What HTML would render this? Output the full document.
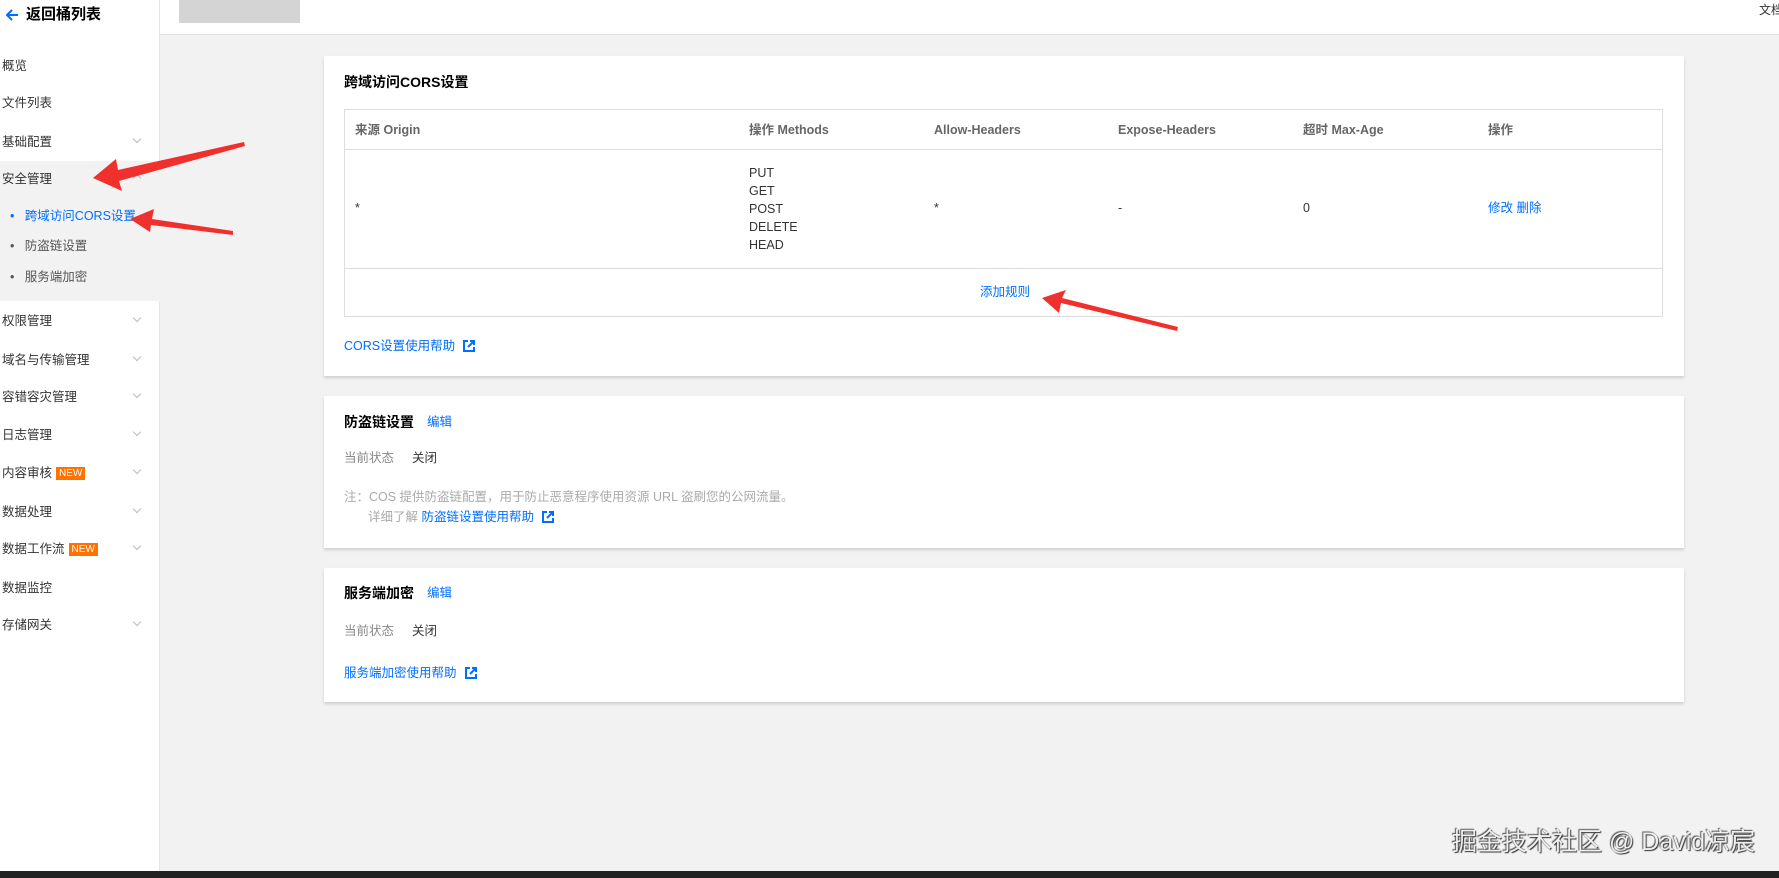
<!DOCTYPE html>
<html><head><meta charset="utf-8"><style>
*{margin:0;padding:0;box-sizing:border-box}
body{width:1779px;height:878px;overflow:hidden;background:#f2f2f2;font-family:"Liberation Sans","Noto Sans CJK SC",sans-serif;font-size:12.5px;color:#333;position:relative}
.a{position:absolute;white-space:nowrap;line-height:16px}
.blue{color:#006eff}
.grey{color:#888}
.side{position:absolute;left:0;top:0;width:160px;height:878px;background:#fff;border-right:1px solid #e5e5e5}
.card{position:absolute;left:324px;width:1360px;background:#fff;box-shadow:0 2px 3px rgba(0,0,0,.15)}
.chev{position:absolute;left:134px;width:6px;height:6px;border-right:1px solid #bbb;border-bottom:1px solid #bbb;transform:rotate(45deg)}
.new{background:#ff7200;color:#fff;font-size:10px;padding:0 3px;line-height:13px;margin-left:4px;display:inline-block;vertical-align:1px}
.ext{display:inline-block;margin-left:8px;vertical-align:-2px}
.th{color:#666;font-weight:bold}
</style></head><body>
<div style="position:absolute;left:0;top:0;width:1779px;height:34px;background:#fff"></div>
<div style="position:absolute;left:160px;top:34px;width:1619px;height:1px;background:#e2e2e2"></div>
<div style="position:absolute;left:179px;top:0;width:121px;height:23px;background:#d4d4d4"></div>
<div class="side"></div>
<div style="position:absolute;left:0;top:161px;width:160px;height:140px;background:#f2f2f2"></div>
<svg class="a" style="left:4px;top:7px" width="16" height="16" viewBox="0 0 16 16"><path d="M14 8H3M8 3L3 8l5 5" stroke="#006eff" stroke-width="2" fill="none"/></svg>
<div class="a" style="left:26px;top:7px;font-size:15px;font-weight:bold;color:#000">返回桶列表</div>
<div class="a" style="left:1759px;top:2px;font-size:12px">文档</div>
<div class="a" style="left:2px;top:58px">概览</div>
<div class="a" style="left:2px;top:95px">文件列表</div>
<div class="a" style="left:2px;top:134px">基础配置</div><div class="chev" style="top:136px"></div>
<div class="a" style="left:2px;top:171px">安全管理</div><div class="chev" style="top:175px;transform:rotate(225deg)"></div>
<div class="a" style="left:10px;top:208px;color:#006eff">•&nbsp;&nbsp;&nbsp;跨域访问CORS设置</div>
<div class="a" style="left:10px;top:238px;color:#555">•&nbsp;&nbsp;&nbsp;防盗链设置</div>
<div class="a" style="left:10px;top:269px;color:#555">•&nbsp;&nbsp;&nbsp;服务端加密</div>
<div class="a" style="left:2px;top:313px">权限管理</div><div class="chev" style="top:315px"></div>
<div class="a" style="left:2px;top:352px">域名与传输管理</div><div class="chev" style="top:354px"></div>
<div class="a" style="left:2px;top:389px">容错容灾管理</div><div class="chev" style="top:391px"></div>
<div class="a" style="left:2px;top:427px">日志管理</div><div class="chev" style="top:429px"></div>
<div class="a" style="left:2px;top:465px">内容审核<span class="new">NEW</span></div><div class="chev" style="top:467px"></div>
<div class="a" style="left:2px;top:504px">数据处理</div><div class="chev" style="top:506px"></div>
<div class="a" style="left:2px;top:541px">数据工作流<span class="new">NEW</span></div><div class="chev" style="top:543px"></div>
<div class="a" style="left:2px;top:580px">数据监控</div>
<div class="a" style="left:2px;top:617px">存储网关</div><div class="chev" style="top:619px"></div>

<div class="card" style="top:56px;height:320px"></div>
<div class="a" style="left:344px;top:74px;font-size:14px;font-weight:bold;color:#000">跨域访问CORS设置</div>
<div style="position:absolute;left:344px;top:109px;width:1319px;height:208px;border:1px solid #ddd"></div>
<div style="position:absolute;left:344px;top:149px;width:1319px;height:1px;background:#ddd"></div>
<div style="position:absolute;left:344px;top:268px;width:1319px;height:1px;background:#ddd"></div>
<div class="a th" style="left:355px;top:122px">来源 Origin</div>
<div class="a th" style="left:749px;top:122px">操作 Methods</div>
<div class="a th" style="left:934px;top:122px">Allow-Headers</div>
<div class="a th" style="left:1118px;top:122px">Expose-Headers</div>
<div class="a th" style="left:1303px;top:122px">超时 Max-Age</div>
<div class="a th" style="left:1488px;top:122px">操作</div>
<div class="a" style="left:355px;top:200px">*</div>
<div class="a" style="left:749px;top:164px;line-height:18px">PUT<br>GET<br>POST<br>DELETE<br>HEAD</div>
<div class="a" style="left:934px;top:200px">*</div>
<div class="a" style="left:1118px;top:200px">-</div>
<div class="a" style="left:1303px;top:200px">0</div>
<div class="a blue" style="left:1488px;top:200px">修改 删除</div>
<div class="a blue" style="left:980px;top:284px">添加规则</div>
<div class="a blue" style="left:344px;top:338px">CORS设置使用帮助<svg class="ext" width="12" height="12" viewBox="0 0 12 12"><path d="M5 1H1v10h10V7" stroke="#006eff" stroke-width="2" fill="none"/><path d="M7 1h4v4M11 1L5 7" stroke="#006eff" stroke-width="2" fill="none"/></svg></div>

<div class="card" style="top:396px;height:152px"></div>
<div class="a" style="left:344px;top:414px;font-size:14px;font-weight:bold;color:#000">防盗链设置</div>
<div class="a blue" style="left:427px;top:414px">编辑</div>
<div class="a grey" style="left:344px;top:450px">当前状态</div><div class="a" style="left:412px;top:450px">关闭</div>
<div class="a" style="left:344px;top:489px;color:#aaa">注：COS 提供防盗链配置，用于防止恶意程序使用资源 URL 盗刷您的公网流量。</div>
<div class="a" style="left:368px;top:509px;color:#aaa">详细了解 <span class="blue">防盗链设置使用帮助</span><svg class="ext" width="12" height="12" viewBox="0 0 12 12"><path d="M5 1H1v10h10V7" stroke="#006eff" stroke-width="2" fill="none"/><path d="M7 1h4v4M11 1L5 7" stroke="#006eff" stroke-width="2" fill="none"/></svg></div>

<div class="card" style="top:568px;height:134px"></div>
<div class="a" style="left:344px;top:585px;font-size:14px;font-weight:bold;color:#000">服务端加密</div>
<div class="a blue" style="left:427px;top:585px">编辑</div>
<div class="a grey" style="left:344px;top:623px">当前状态</div><div class="a" style="left:412px;top:623px">关闭</div>
<div class="a blue" style="left:344px;top:665px">服务端加密使用帮助<svg class="ext" width="12" height="12" viewBox="0 0 12 12"><path d="M5 1H1v10h10V7" stroke="#006eff" stroke-width="2" fill="none"/><path d="M7 1h4v4M11 1L5 7" stroke="#006eff" stroke-width="2" fill="none"/></svg></div>

<svg class="a" style="left:0;top:0" width="1779" height="878">
<g fill="#f0302c">
<polygon points="244,142 118,170 116,159 93,178 122,191 119,181 245,146"/>
<polygon points="233,231 152,219 154,209 130,219 150,232 151,225 233,235"/>
<polygon points="1178,327 1062,298 1066,290 1042,298 1059,313 1061,303 1177,331"/>
</g></svg>
<div class="a" style="left:1452px;top:828px;font-size:25px;line-height:28px;color:#eee;text-shadow:1px 1px 1px #333,-1px -1px 1px #555">掘金技术社区 @ David凉宸</div>
<div style="position:absolute;left:0;top:871px;width:1779px;height:7px;background:#222"></div>
</body></html>
